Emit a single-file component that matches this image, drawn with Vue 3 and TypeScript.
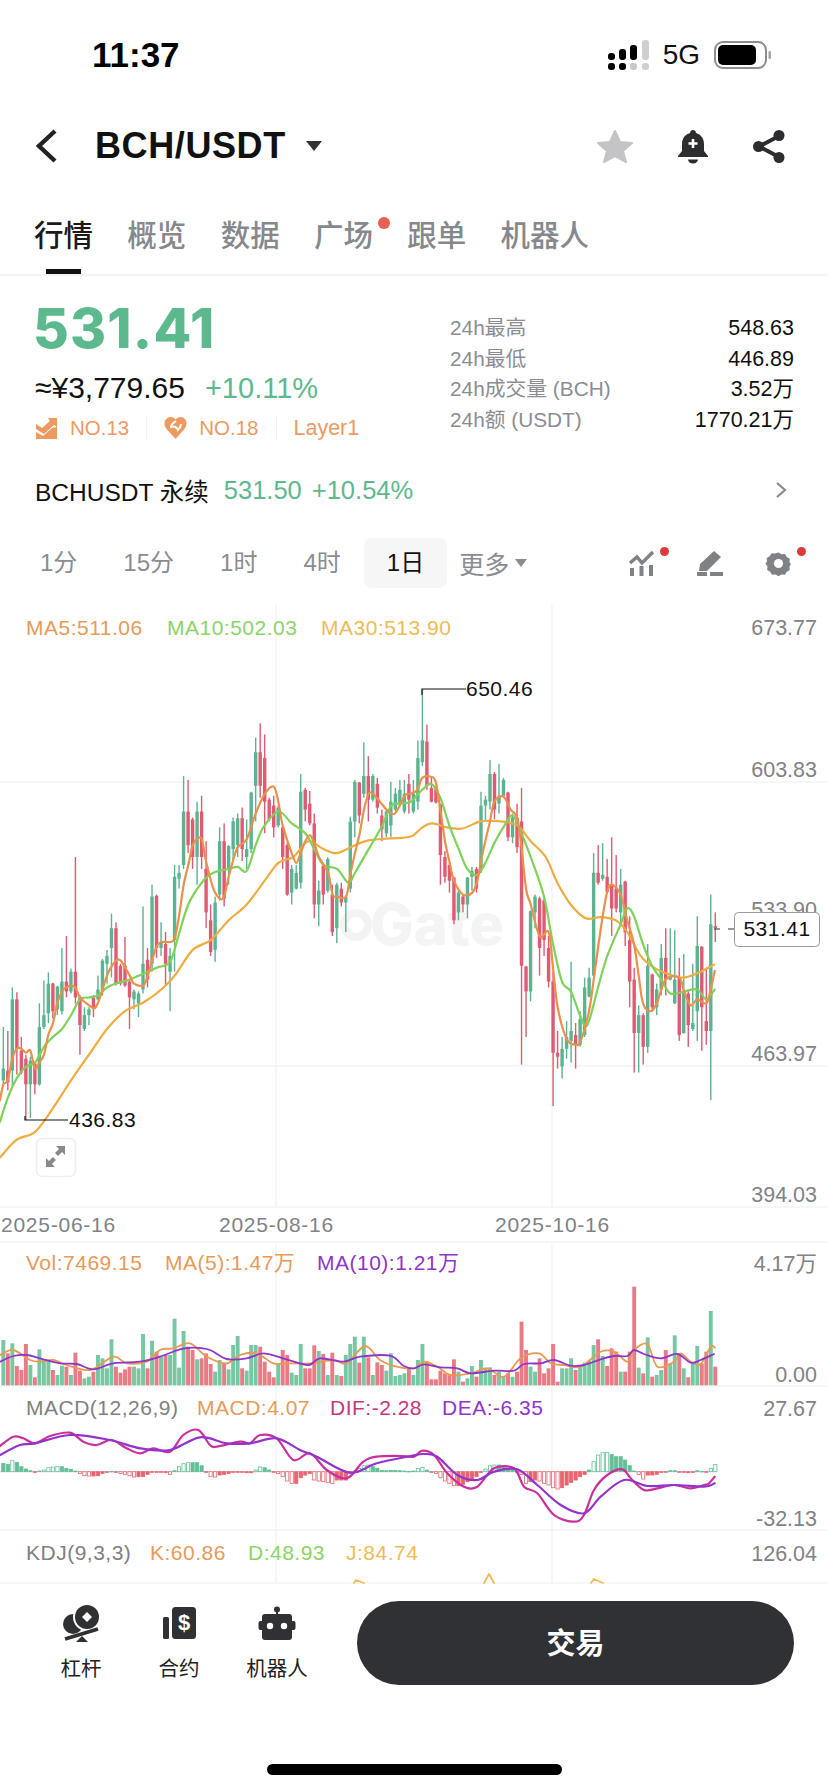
<script setup lang="ts">
type Pt = [number, number];

// candle rows, read off the chart: colour, high, body top, body bottom, low, volume top
const rows = `g 1080 1185 1215 1230 420|r 1090 1190 1220 1240 460|g 980 1010 1190 1230 430|r 992 1010 1135 1200 498|r 1105 1140 1195 1200 510|r 1150 1160 1225 1315 432|g 1155 1165 1225 1310 495|r 1170 1172 1225 1250 532|g 1020 1080 1225 1228 448|g 962 1050 1080 1085 478|g 942 970 1045 1070 482|r 968 970 1040 1058 510|g 975 978 1035 1050 525|g 880 965 1040 1048 497|r 850 965 990 1005 500|g 932 940 990 995 525|r 650 940 1005 1020 458|r 1000 1005 1075 1150 512|g 1030 1050 1085 1090 535|g 1030 1035 1050 1075 530|r 1000 1005 1030 1055 515|g 950 985 1010 1012 465|g 908 912 990 1000 475|g 885 900 920 970 505|g 793 830 880 955 418|r 815 830 970 975 500|r 920 925 970 975 518|r 852 925 975 978 508|r 960 965 1005 1085 500|g 985 990 1010 1035 500|g 990 995 1020 1055 505|g 775 920 985 995 402|r 880 910 960 980 505|g 720 750 920 940 422|r 745 748 880 905 455|g 815 865 880 900 470|r 840 870 920 975 465|g 880 900 940 1040 465|g 670 700 860 940 356|g 670 690 705 730 503|g 445 535 670 680 393|r 455 535 620 640 440|r 550 555 650 680 450|g 510 535 650 720 478|r 495 535 650 680 475|r 610 680 790 830 460|r 770 810 890 900 492|g 750 765 885 915 515|g 575 610 745 760 480|r 565 610 755 775 490|g 620 622 680 720 508|g 550 560 630 660 435|g 540 552 620 650 408|r 525 552 630 660 505|g 555 630 650 680 512|g 485 487 630 640 435|g 348 385 470 560 435|r 312 385 470 500 440|r 340 400 510 590 485|r 500 505 555 560 515|r 495 520 575 600 532|g 520 525 570 575 490|r 570 575 650 680 450|r 615 620 745 748 465|g 670 680 740 770 518|g 670 690 730 732 525|g 440 485 715 730 432|r 475 480 530 560 505|r 483 515 565 570 505|r 540 565 770 805 436|g 710 735 770 825 453|r 670 672 745 770 462|g 650 655 735 740 525|r 720 745 840 850 458|g 715 720 830 868 525|r 715 730 765 775 528|g 750 752 765 840 465|g 548 560 730 740 432|g 455 460 560 600 410|r 460 462 545 565 488|g 360 445 490 500 410|r 395 445 505 560 472|g 440 445 505 510 525|r 450 465 525 540 487|r 530 545 580 610 495|g 530 535 590 600 512|g 460 510 570 600 460|g 475 490 530 535 528|g 455 480 515 520 525|g 455 490 535 540 520|r 440 465 505 540 505|g 455 490 535 540 525|g 355 400 510 530 480|g 226 355 410 420 432|r 315 358 470 480 485|r 450 475 510 512 538|r 470 475 512 515 538|r 515 517 645 720 512|r 635 650 700 715 520|r 665 670 710 740 525|r 700 702 810 820 478|g 735 740 790 810 515|r 745 750 770 790 545|g 700 702 770 805 535|g 675 685 700 735 498|r 675 680 730 740 530|g 485 520 680 690 480|g 495 505 520 560 505|g 405 440 510 530 502|r 435 440 530 555 525|g 415 495 515 540 515|g 450 455 495 500 530|r 485 487 600 610 520|g 540 550 600 615 530|r 515 550 625 640 515|r 475 560 925 1175 365|r 925 927 990 1105 450|g 785 787 990 1015 500|g 745 750 790 830 515|r 750 755 880 950 475|r 755 760 860 900 520|r 850 880 965 980 505|r 940 965 1145 1280 432|r 1090 1145 1155 1185 545|g 1105 1135 1180 1210 505|g 1065 1105 1135 1160 505|g 915 1090 1115 1170 475|r 1070 1100 1125 1185 510|g 1040 1060 1125 1130 500|g 955 980 1100 1105 488|g 930 955 1003 1005 482|g 640 690 950 952 435|r 620 690 715 720 418|g 615 695 705 710 468|r 655 700 738 740 498|r 600 720 780 850 445|r 645 730 780 790 455|g 680 720 790 820 515|r 710 712 840 875 515|r 800 860 965 1030 455|r 930 960 1095 1195 260|g 1025 1050 1095 1195 503|r 1045 1050 1130 1175 520|g 870 925 1130 1145 412|r 945 947 1030 1040 530|g 970 985 1030 1050 525|g 870 905 985 1000 510|r 830 905 960 1000 450|g 830 950 960 962 490|g 835 960 1020 1022 406|r 905 955 1100 1115 460|g 895 990 1095 1097 505|r 985 995 1075 1130 532|g 920 1070 1085 1090 490|g 800 875 1040 1115 438|r 875 877 1030 1140 490|r 930 1065 1090 1125 455|g 745 820 1090 1265 333|r 790 825 830 865 500`
  .split('|')
  .map((r) => r.split(' '));

const candleX = (i: number, n: number) => 3.33 + (i * (715.3 - 3.33)) / (n - 1);
const py = (z: number) => 600 + z / 2.529;
const sy = (z: number) => 1200 + z / 3;

const candles = rows.map((r, i) => {
  const [high, top, bottom, low, vol] = r.slice(1).map(Number);
  return {
    x: candleX(i, rows.length),
    up: r[0] === 'g',
    high: py(high),
    low: py(low),
    top: py(top),
    h: Math.max(1, (bottom - top) / 2.529),
    volTop: sy(vol),
    volH: (556 - vol) / 3,
  };
});

const macdVals = [25, 22, 33, 28, 15, 8, 3, -2, 2, 5, 12, 14, 15, 15, 10, 7, 2, -5, -12, -13, -13, -12, -5, -2, 1, -2, -5, -8, -12, -16, -15, -14, -8, 0, 0, 0, -3, -8, 3, 15, 24, 27, 27, 27, 18, 0, -15, -16, -10, -8, -5, 0, -1, -1, -3, -3, 5, 14, 12, 5, 0, -6, -15, -28, -35, -35, -18, -10, -5, -25, -28, -30, -33, -35, -25, -25, -25, -5, 2, 10, 18, 20, 15, 10, 4, 3, 4, 4, 3, 2, 1, 2, 10, 13, 5, 0, -5, -18, -28, -35, -42, -42, -38, -30, -25, -15, -2, 8, 18, 20, 20, 18, 10, 5, 0, -8, -35, -30, -25, -28, -35, -40, -48, -52, -48, -40, -32, -25, -15, -8, 5, 30, 50, 57, 58, 52, 45, 45, 35, 18, 2, -8, -22, -10, -10, -8, -2, 0, 3, 3, -1, 0, -3, -2, 3, 1, -1, 10, 22];
const macdBars = macdVals.map((v, i) => ({
  x: candleX(i, macdVals.length),
  y: v > 0 ? 1471.7 - v / 3 : 1471.7,
  h: Math.max(0.6, Math.abs(v) / 3),
  up: v > 0,
  hollow: i > 0 && Math.abs(v) > Math.abs(macdVals[i - 1]) && Math.abs(v) > 4,
}));

// catmull-rom through the points read from the chart
function smooth(pts: Pt[]): string {
  let d = `M${pts[0][0].toFixed(1)} ${pts[0][1].toFixed(1)}`;
  for (let i = 0; i < pts.length - 1; i++) {
    const p0 = pts[Math.max(i - 1, 0)];
    const p1 = pts[i];
    const p2 = pts[i + 1];
    const p3 = pts[Math.min(i + 2, pts.length - 1)];
    const c1x = p1[0] + (p2[0] - p0[0]) / 6;
    const c1y = p1[1] + (p2[1] - p0[1]) / 6;
    const c2x = p2[0] - (p3[0] - p1[0]) / 6;
    const c2y = p2[1] - (p3[1] - p1[1]) / 6;
    d += `C${c1x.toFixed(1)} ${c1y.toFixed(1)} ${c2x.toFixed(1)} ${c2y.toFixed(1)} ${p2[0].toFixed(1)} ${p2[1].toFixed(1)}`;
  }
  return d;
}

function line(left: number[], right: number[], toY: (z: number) => number): string {
  const pts: Pt[] = [];
  for (let i = 0; i < left.length; i += 2) pts.push([left[i] / 3, toY(left[i + 1])]);
  for (let i = 0; i < right.length; i += 2) pts.push([414 + right[i] / 3, toY(right[i + 1])]);
  return smooth(pts);
}

const ma5 = line(
  [0, 1265, 10, 1225, 23, 1215, 37, 1160, 50, 1135, 64, 1135, 78, 1145, 91, 1140, 105, 1185, 118, 1170, 132, 1150, 145, 1100, 159, 1070, 172, 1020, 186, 990, 199, 980, 213, 975, 226, 980, 240, 1005, 267, 1025, 285, 1032, 300, 1005, 321, 950, 345, 915, 362, 912, 389, 950, 402, 970, 430, 975, 443, 950, 457, 910, 470, 875, 484, 865, 510, 865, 524, 855, 537, 800, 551, 720, 565, 670, 578, 620, 591, 605, 605, 605, 618, 660, 640, 730, 659, 755, 672, 750, 686, 700, 699, 660, 713, 625, 740, 605, 767, 540, 794, 490, 821, 472, 835, 510, 848, 570, 875, 640, 889, 665, 902, 640, 916, 610, 930, 595, 943, 615, 957, 650, 984, 690, 998, 745, 1011, 750, 1038, 750, 1052, 690, 1065, 640, 1079, 590, 1092, 530, 1106, 490, 1119, 490, 1140, 510, 1160, 530, 1185, 540, 1214, 495],
  [-10, 490, 10, 480, 25, 450, 50, 447, 65, 460, 79, 530, 93, 610, 106, 660, 120, 710, 147, 745, 175, 740, 190, 710, 201, 660, 214, 610, 228, 560, 241, 510, 268, 497, 290, 530, 309, 550, 322, 620, 336, 730, 350, 770, 377, 850, 404, 840, 417, 930, 431, 1030, 458, 1110, 485, 1125, 500, 1115, 525, 1040, 539, 960, 552, 880, 566, 800, 579, 740, 593, 720, 620, 745, 640, 810, 660, 870, 674, 950, 687, 1020, 710, 1040, 728, 1020, 755, 960, 796, 955, 810, 990, 830, 1025, 850, 1010, 877, 1020, 890, 985, 902, 938],
  py,
);
const ma10 = line(
  [0, 1320, 23, 1260, 50, 1210, 78, 1180, 105, 1170, 132, 1130, 159, 1105, 186, 1085, 213, 1050, 240, 1010, 267, 1005, 294, 1000, 321, 980, 348, 970, 389, 960, 430, 945, 470, 930, 510, 915, 535, 850, 565, 770, 605, 715, 640, 690, 686, 680, 713, 675, 740, 685, 767, 620, 790, 575, 835, 535, 875, 565, 916, 590, 943, 630, 970, 670, 1011, 680, 1045, 715, 1065, 690, 1106, 630, 1147, 570, 1174, 520, 1201, 515],
  [-10, 510, 25, 480, 52, 465, 79, 500, 106, 570, 134, 630, 160, 680, 190, 695, 214, 665, 241, 615, 268, 575, 296, 545, 322, 590, 350, 650, 390, 750, 417, 870, 444, 965, 471, 990, 498, 1050, 520, 1075, 552, 980, 580, 900, 620, 820, 640, 780, 660, 800, 687, 870, 714, 925, 742, 960, 769, 995, 810, 990, 850, 985, 877, 1010, 902, 985],
  py,
);
const ma30 = line(
  [0, 1410, 50, 1365, 105, 1345, 159, 1285, 213, 1215, 267, 1150, 321, 1085, 375, 1040, 430, 1018, 484, 985, 524, 950, 578, 885, 632, 860, 686, 810, 740, 770, 794, 710, 835, 665, 880, 650, 925, 610, 970, 630, 1011, 640, 1065, 620, 1106, 608, 1170, 603],
  [-10, 598, 25, 575, 55, 565, 100, 575, 145, 578, 200, 560, 260, 560, 310, 570, 350, 610, 395, 650, 430, 715, 470, 770, 515, 805, 560, 802, 605, 810, 640, 840, 680, 900, 720, 930, 760, 945, 810, 955, 860, 940, 900, 922],
  py,
);
const volMa10 = line(
  [0, 485, 40, 468, 80, 465, 130, 478, 180, 490, 230, 492, 280, 508, 340, 490, 420, 485, 480, 470, 540, 448, 580, 443, 630, 450, 680, 477, 740, 475, 790, 460, 850, 475, 925, 495, 960, 475, 1030, 485, 1080, 470, 1170, 467, 1210, 497],
  [0, 505, 30, 493, 80, 502, 130, 505, 170, 520, 240, 512, 300, 512, 330, 492, 380, 490, 420, 480, 470, 497, 510, 495, 560, 478, 600, 468, 640, 468, 660, 450, 690, 462, 740, 475, 790, 462, 830, 488, 860, 480, 900, 462],
  sy,
);
const volMa5 = line(
  [0, 465, 40, 450, 90, 480, 120, 485, 160, 480, 200, 495, 270, 510, 340, 470, 380, 490, 440, 485, 480, 450, 520, 445, 570, 430, 620, 470, 680, 490, 720, 465, 770, 460, 820, 490, 860, 490, 930, 490, 1000, 480, 1040, 490, 1095, 438, 1140, 480, 1190, 500],
  [0, 505, 30, 485, 70, 500, 110, 525, 170, 520, 220, 505, 270, 530, 320, 475, 375, 460, 410, 490, 450, 495, 500, 500, 560, 455, 600, 455, 640, 485, 660, 450, 700, 432, 730, 500, 780, 485, 800, 460, 830, 485, 860, 492, 890, 440, 902, 443],
  sy,
);
const dif = line(
  [0, 738, 40, 710, 70, 715, 105, 730, 150, 708, 210, 698, 250, 725, 290, 735, 335, 720, 380, 745, 420, 760, 460, 745, 510, 755, 550, 705, 595, 690, 630, 735, 650, 740, 720, 725, 750, 730, 780, 705, 830, 715, 880, 780, 930, 760, 980, 810, 1040, 835, 1090, 785, 1130, 770, 1210, 768],
  [0, 770, 25, 752, 60, 765, 100, 820, 150, 860, 190, 860, 240, 805, 300, 805, 330, 860, 370, 880, 420, 945, 480, 965, 510, 945, 540, 870, 580, 825, 625, 808, 650, 835, 690, 870, 730, 865, 780, 855, 830, 865, 870, 855, 885, 850, 902, 830],
  sy,
);
const dea = line(
  [0, 765, 60, 735, 105, 730, 210, 705, 330, 720, 420, 745, 510, 750, 600, 712, 680, 730, 750, 730, 830, 715, 900, 750, 950, 770, 1050, 818, 1130, 790],
  [-10, 768, 30, 762, 70, 770, 130, 825, 190, 840, 240, 815, 310, 808, 370, 855, 440, 915, 510, 940, 560, 890, 630, 840, 700, 858, 780, 855, 870, 860, 902, 850],
  sy,
);

const tabs = ['行情', '概览', '数据', '广场', '跟单', '机器人'];
const stats = [
  ['24h最高', '548.63'],
  ['24h最低', '446.89'],
  ['24h成交量 (BCH)', '3.52万'],
  ['24h额 (USDT)', '1770.21万'],
];
const frames = ['1分', '15分', '1时', '4时', '1日'];
const axis = [
  ['673.77', 635],
  ['603.83', 777],
  ['533.90', 917],
  ['463.97', 1061],
  ['394.03', 1202],
  ['4.17万', 1271],
  ['0.00', 1382],
  ['27.67', 1416],
  ['-32.13', 1526],
  ['126.04', 1561],
] as const;
</script>

<template>
  <div class="page">
    <div class="status">
      <span class="time">11:37</span>
      <div class="status-right">
        <svg width="42" height="30" viewBox="0 0 42 30">
          <rect x="0" y="13" width="7" height="7" rx="3" fill="#000" />
          <rect x="0" y="23" width="7" height="7" rx="3" fill="#000" />
          <rect x="11" y="9" width="7" height="11" rx="3" fill="#000" />
          <rect x="11" y="23" width="7" height="7" rx="3" fill="#000" />
          <rect x="22" y="5" width="7" height="15" rx="3" fill="#000" />
          <rect x="22" y="23" width="7" height="7" rx="3" fill="#c8c8c8" />
          <rect x="34" y="0" width="7" height="20" rx="3" fill="#cfcfcf" />
          <rect x="34" y="23" width="7" height="7" rx="3" fill="#cfcfcf" />
        </svg>
        <span class="net">5G</span>
        <svg width="58" height="28" viewBox="0 0 58 28">
          <rect x="1" y="1" width="51" height="26" rx="8" fill="none" stroke="#8d8d8d" stroke-width="2" />
          <rect x="4" y="4" width="38" height="20" rx="5" fill="#000" />
          <rect x="54.5" y="10" width="2.5" height="8" rx="1.2" fill="#a5a5a5" />
        </svg>
      </div>
    </div>

    <div class="nav">
      <svg class="back" width="22" height="34" viewBox="0 0 22 34">
        <path d="M19 2 3 17l16 15" fill="none" stroke="#222" stroke-width="4.4" />
      </svg>
      <span class="pair">BCH/USDT</span>
      <span class="pair-caret"></span>
      <div class="nav-icons">
        <svg width="38" height="36" viewBox="0 0 38 36">
          <path d="M19 3l5 11 12 1-9 8 3 11-11-6-11 6 3-11-9-8 12-1z" fill="#c4c4c6" stroke="#c4c4c6" stroke-width="2" stroke-linejoin="round" />
        </svg>
        <svg width="32" height="35" viewBox="0 0 32 35">
          <path d="M16 1c2 0 3 1.500 3 3 5 1.500 8 5.500 8 11v7l4 5v1H1v-1l4-5v-7c0-5.500 3-9.500 8-11 0-1.500 1-3 3-3z" fill="#2b2d30" />
          <path d="M11 30.500h10a5 4 0 0 1-10 0z" fill="#2b2d30" />
          <path d="M16 10v9M11.500 14.500h9" stroke="#fff" stroke-width="2.600" />
        </svg>
        <svg width="34" height="35" viewBox="0 0 34 35">
          <path d="M27 7 7 17.500 27 28" fill="none" stroke="#2b2d30" stroke-width="4" />
          <circle cx="27" cy="6.500" r="5.500" fill="#2b2d30" />
          <circle cx="6.500" cy="17.500" r="5.500" fill="#2b2d30" />
          <circle cx="27" cy="28.500" r="5.500" fill="#2b2d30" />
        </svg>
      </div>
    </div>

    <div class="tabs">
      <div v-for="(t, i) in tabs" :key="t" class="tab" :class="{ active: i === 0 }">
        {{ t }}
        <span v-if="t === '广场'" class="tab-dot"></span>
      </div>
    </div>

    <div class="summary">
      <div class="summary-left">
        <div class="price">531.41</div>
        <div class="fiat">≈¥3,779.65<span class="change">+10.11%</span></div>
        <div class="tags">
          <svg width="23" height="22" viewBox="0 0 23 22">
            <path d="M1 7l6 4 8-7-2-3h9v9l-3-2-10 9-8-5z" fill="#ec9a5f" />
            <path d="M1 15l7 4 9-8 5-1v12H1z" fill="#ec9a5f" />
          </svg>
          <span>NO.13</span>
          <i></i>
          <svg width="23" height="24" viewBox="0 0 23 24">
            <path d="M11.500 23 2.500 13C-1.500 8 1 1 7 1c2 0 3.500 1 4.500 2.500C13 2 14.500 1 16.500 1c5.500 0 8 7 4 12z" fill="#ec9a5f" />
            <path d="M12 5c-3 2-5 4-5 6 3-1 6 0 7 3 2-2 3-4 3-6" fill="none" stroke="#fff" stroke-width="2" />
          </svg>
          <span>NO.18</span>
          <i></i>
          <span class="layer">Layer1</span>
        </div>
      </div>
      <div class="stats">
        <div v-for="s in stats" :key="s[0]" class="stat">
          <span class="stat-label">{{ s[0] }}</span>
          <span class="stat-value">{{ s[1] }}</span>
        </div>
      </div>
    </div>

    <div class="perp">
      <span class="perp-name">BCHUSDT 永续</span>
      <span class="perp-num">531.50</span>
      <span class="perp-num">+10.54%</span>
      <svg class="perp-arrow" width="12" height="18" viewBox="0 0 12 18">
        <path d="M2 2l8 7-8 7" fill="none" stroke="#8a8a8a" stroke-width="2.200" />
      </svg>
    </div>

    <div class="frames">
      <div v-for="f in frames" :key="f" class="frame" :class="{ active: f === '1日' }">{{ f }}</div>
      <div class="more">更多<span class="more-caret"></span></div>
      <div class="tools">
        <div class="tool">
          <svg width="27" height="26" viewBox="0 0 27 26">
            <path d="M2 13l7-6 5 6L25 2" fill="none" stroke="#7f8285" stroke-width="3.400" />
            <path d="M2 18h4v8H2zM11.500 16h4v10h-4zM21 15h4v11h-4z" fill="#7f8285" />
          </svg>
          <span class="tool-dot"></span>
        </div>
        <div class="tool">
          <svg width="28" height="26" viewBox="0 0 28 26">
            <path d="M18 1l7 6L11 21H3l1-7z" fill="#7f8285" />
            <path d="M14 22h13v4H14zM1 22h10v4H1z" fill="#7f8285" />
          </svg>
        </div>
        <div class="tool">
          <svg width="27" height="27" viewBox="0 0 27 27">
            <path d="M13.500 2.500l3 1.700 3.500-.3 1.800 3 3 1.800-.3 3.500 1.500 1.800-1.500 2.500.3 3.500-3 1.800-1.800 3-3.500-.3-3 1.700-3-1.700-3.500.3-1.800-3-3-1.800.3-3.500L.5 13.500l1.500-2-.3-3.500 3-1.800 1.800-3 3.500.3z" fill="#7f8285" />
            <circle cx="13.500" cy="13.500" r="4.600" fill="#fff" />
          </svg>
          <span class="tool-dot"></span>
        </div>
      </div>
    </div>

    <svg class="chart" width="828" height="979" viewBox="0 605 828 979">
      <g stroke="#f3f3f3" stroke-width="1.500">
        <path d="M276 605V1207M552 605V1207M276 1245V1583M552 1245V1583" />
        <path d="M0 782H828M0 1066H828M0 1207H828M0 1242H828M0 1386H828M0 1530H828M0 1583H828" />
      </g>

      <g>
        <circle cx="356" cy="925" r="12" fill="none" stroke="#f3f3f3" stroke-width="8" />
        <text x="370" y="945" class="mark-text">Gate</text>
      </g>

      <g v-for="c in candles" :key="c.x">
        <rect :x="c.x - 0.7" :y="c.high" width="1.400" :height="c.low - c.high" :fill="c.up ? '#5cb390' : '#df5a72'" />
        <rect :x="c.x - 1.700" :y="c.top" width="3.400" :height="c.h" :fill="c.up ? '#5cb390' : '#df5a72'" />
        <rect :x="c.x - 1.950" :y="c.volTop" width="3.900" :height="c.volH" :fill="c.up ? '#76c7a2' : '#ea7a84'" />
      </g>

      <path :d="ma30" class="ln" stroke="#efac40" />
      <path :d="ma10" class="ln" stroke="#7ed257" />
      <path :d="ma5" class="ln" stroke="#e9914a" />

      <text x="26" y="635" class="lg" fill="#e79a58">MA5:511.06</text>
      <text x="167" y="635" class="lg" fill="#8ad566">MA10:502.03</text>
      <text x="321" y="635" class="lg" fill="#efbb55">MA30:513.90</text>

      <path d="M422 695V689H466M25 1116V1120H68" fill="none" stroke="#111" stroke-width="1.200" />
      <text x="466" y="696" class="lg" fill="#111">650.46</text>
      <text x="69" y="1127" class="lg" fill="#111">436.83</text>

      <text v-for="a in axis" :key="a[0]" x="817" :y="a[1]" class="lg axis">{{ a[0] }}</text>

      <path d="M714 929h6M728 929h6" stroke="#333" stroke-width="1.200" />
      <rect x="734.500" y="912.500" width="85" height="34" rx="4" fill="#fff" stroke="#999" />
      <text x="777" y="936" class="lg tag-text">531.41</text>

      <rect x="36.500" y="1138.500" width="39" height="38" rx="6" fill="#fff" stroke="#eeeeee" stroke-width="1.500" />
      <path d="M46 1167v-9l3 3 4-4 3 3-4 4 3 3zM65 1146v9l-3-3-4 4-3-3 4-4-3-3z" fill="#8a8a8a" />

      <text x="1" y="1232" class="lg date">2025-06-16</text>
      <text x="219" y="1232" class="lg date">2025-08-16</text>
      <text x="495" y="1232" class="lg date">2025-10-16</text>

      <path :d="volMa5" class="ln thin" stroke="#ea9a4e" />
      <path :d="volMa10" class="ln thin" stroke="#8f35cc" />
      <text x="26" y="1270" class="lg" fill="#e79a58">Vol:7469.15</text>
      <text x="165" y="1270" class="lg" fill="#e79a58">MA(5):1.47万</text>
      <text x="317" y="1270" class="lg" fill="#8f35cc">MA(10):1.21万</text>

      <rect x="0" y="1471.300" width="716" height="0.800" fill="#cfcfcf" />
      <rect
        v-for="b in macdBars"
        :key="b.x"
        :x="b.x - 1.600"
        :y="b.y"
        width="3.200"
        :height="b.h"
        :fill="b.hollow ? '#fff' : b.up ? '#63bf96' : '#e8646f'"
        :stroke="b.up ? '#63bf96' : '#e8646f'"
        stroke-width="0.800"
      />
      <path :d="dif" class="ln" stroke="#cb2f9c" />
      <path :d="dea" class="ln" stroke="#9233cc" />
      <text x="26" y="1415" class="lg" fill="#808080">MACD(12,26,9)</text>
      <text x="197" y="1415" class="lg" fill="#e79a58">MACD:4.07</text>
      <text x="330" y="1415" class="lg" fill="#c8357f">DIF:-2.28</text>
      <text x="442" y="1415" class="lg" fill="#8f35cc">DEA:-6.35</text>

      <text x="26" y="1560" class="lg" fill="#808080">KDJ(9,3,3)</text>
      <text x="150" y="1560" class="lg" fill="#e79a58">K:60.86</text>
      <text x="248" y="1560" class="lg" fill="#8ad566">D:48.93</text>
      <text x="346" y="1560" class="lg" fill="#efbb55">J:84.74</text>
      <path d="M354 1583l2-3 8 3M484 1583l5-9 5 9M591 1583l3-4 9 4" class="ln thin" stroke="#efbb55" />
    </svg>

    <div class="bottom">
      <div class="action">
        <div class="action-icon">
          <svg width="38" height="38" viewBox="0 0 38 38">
            <circle cx="11" cy="20" r="10" fill="#2f3135" />
            <circle cx="25" cy="13" r="14" fill="#fff" />
            <circle cx="25" cy="13" r="12" fill="#2f3135" />
            <path d="M25 8l5 5-5 5-5-5z" fill="#fff" />
            <path d="M3 35l33-10" stroke="#2f3135" stroke-width="3.600" />
            <path d="M14 38l6-6 6 6z" fill="#2f3135" />
          </svg>
        </div>
        <span>杠杆</span>
      </div>
      <div class="action">
        <div class="action-icon">
          <svg width="34" height="34" viewBox="0 0 34 34">
            <rect x="1" y="11" width="6" height="22" rx="1.500" fill="#2f3135" />
            <rect x="10" y="1" width="24" height="32" rx="3.500" fill="#2f3135" />
            <text x="22" y="24" class="dollar">$</text>
          </svg>
        </div>
        <span>合约</span>
      </div>
      <div class="action">
        <div class="action-icon">
          <svg width="38" height="35" viewBox="0 0 38 35">
            <circle cx="19" cy="3.500" r="3" fill="#2f3135" />
            <path d="M19 4v6" stroke="#2f3135" stroke-width="2" />
            <rect x="4" y="8" width="30" height="26" rx="3" fill="#2f3135" />
            <rect x="0.500" y="15" width="37" height="9" rx="2" fill="#2f3135" />
            <circle cx="12" cy="20" r="3.200" fill="#fff" />
            <circle cx="26" cy="20" r="3.200" fill="#fff" />
          </svg>
        </div>
        <span>机器人</span>
      </div>
      <div class="trade">交易</div>
    </div>

    <div class="home"></div>
  </div>
</template>

<style scoped>
.page {
  width: 828px;
  height: 1792px;
  overflow: hidden;
  background: #fff;
  display: flex;
  flex-direction: column;
  font-family: "Liberation Sans", "Noto Sans CJK SC", sans-serif;
  color: #111;
}

.status {
  height: 110px;
  display: flex;
  align-items: flex-start;
  justify-content: space-between;
  padding: 40px 56px 0 92px;
  box-sizing: border-box;
}

.time {
  font-size: 35px;
  line-height: 30px;
  font-weight: 700;
  color: #000;
}

.status-right {
  display: flex;
  align-items: center;
  margin-left: auto;
}

.net {
  font-size: 28px;
  line-height: 30px;
  margin: 0 14px 0 13px;
}

.nav {
  height: 72px;
  display: flex;
  align-items: center;
  padding: 0 42px 0 36px;
}

.back {
  margin-right: 37px;
}

.pair {
  font-size: 36px;
  font-weight: 700;
  letter-spacing: 0.6px;
}

.pair-caret {
  width: 0;
  height: 0;
  margin-left: 20px;
  border-left: 8px solid transparent;
  border-right: 8px solid transparent;
  border-top: 10px solid #333;
}

.nav-icons {
  margin-left: auto;
  display: flex;
  align-items: center;
  gap: 43px;
}

.tabs {
  height: 94px;
  box-sizing: border-box;
  display: flex;
  gap: 34.300px;
  padding: 34px 0 0 34px;
  border-bottom: 2px solid #f4f4f4;
}

.tab {
  position: relative;
  font-size: 29.500px;
  font-weight: 500;
  line-height: 40px;
  height: 58px;
  color: #85888c;
}

.tab.active {
  color: #1a1a1a;
}

.tab.active::after {
  content: "";
  position: absolute;
  left: 12px;
  bottom: 0;
  width: 35px;
  height: 5px;
  background: #111;
}

.tab-dot {
  position: absolute;
  top: 1px;
  right: -17px;
  width: 12px;
  height: 12px;
  border-radius: 50%;
  background: #e8604f;
}

.summary {
  height: 190px;
  box-sizing: border-box;
  padding: 22px 35px 0;
  display: flex;
}

.summary-left {
  width: 415px;
}

.price {
  font-family: Inter, "Liberation Sans", sans-serif;
  font-size: 55px;
  line-height: 60px;
  font-weight: 800;
  letter-spacing: 1.200px;
  margin-left: -2px;
  color: #5cb98d;
}

.fiat {
  margin-top: 15px;
  font-size: 30px;
  line-height: 30px;
}

.change {
  margin-left: 20px;
  font-size: 29px;
  color: #5cb98d;
}

.tags {
  margin-top: 10px;
  height: 30px;
  display: flex;
  align-items: center;
  font-size: 20.500px;
  color: #ec9a5f;
}

.tags i {
  width: 1px;
  height: 24px;
  margin: 0 17px;
  background: #f2f2f2;
}

.tags svg + span {
  margin-left: 12px;
}

.layer {
  font-size: 21.500px;
}

.stats {
  flex: 1;
  margin-top: 15px;
}

.stat {
  height: 30.700px;
  line-height: 30.700px;
  display: flex;
  justify-content: space-between;
  font-size: 20.800px;
}

.stat-label {
  color: #8b8d90;
}

.stat-value {
  font-size: 21.500px;
  margin-right: -1px;
}

.perp {
  height: 48px;
  display: flex;
  align-items: center;
  padding: 0 41px 0 35px;
  font-size: 24.500px;
}

.perp-name {
  margin-right: 15px;
}

.perp-num {
  margin-right: 10px;
  font-size: 25.500px;
  color: #5cb98d;
}

.perp-arrow {
  margin-left: auto;
}

.frames {
  height: 50px;
  margin-top: 24px;
  display: flex;
  align-items: center;
  padding: 0 36px 0 17px;
  font-size: 24px;
  color: #8a8c90;
}

.frame {
  padding: 0 23px;
  height: 50px;
  line-height: 50px;
  border-radius: 8px;
}

.frame.active {
  color: #111;
  background: #f6f6f6;
}

.more {
  margin-left: 12px;
  font-size: 25px;
  display: flex;
  align-items: center;
}

.more-caret {
  margin-left: 6px;
  width: 0;
  height: 0;
  border-left: 6px solid transparent;
  border-right: 6px solid transparent;
  border-top: 8px solid #8a8c90;
}

.tools {
  margin-left: auto;
  display: flex;
  align-items: center;
  gap: 41px;
}

.tool {
  position: relative;
  display: flex;
}

.tool-dot {
  position: absolute;
  top: -3px;
  right: -14px;
  width: 9px;
  height: 9px;
  border-radius: 50%;
  background: #dd3a3a;
}

.chart {
  display: block;
  margin-top: 17px;
  flex: none;
}

.ln {
  fill: none;
  stroke-width: 2.200;
  stroke-linejoin: round;
  stroke-linecap: round;
}

.ln.thin {
  stroke-width: 1.800;
}

.lg {
  font-family: "Liberation Sans", "Noto Sans CJK SC", sans-serif;
  font-size: 21px;
  letter-spacing: 0.5px;
}

.axis {
  text-anchor: end;
  fill: #808285;
  letter-spacing: 0;
  font-size: 21.500px;
}

.date {
  fill: #808285;
  letter-spacing: 0.750px;
}

.tag-text {
  text-anchor: middle;
  fill: #111;
}

.mark-text {
  font-family: Inter, "Liberation Sans", sans-serif;
  font-size: 58px;
  font-weight: 800;
  fill: #f4f4f4;
}

.bottom {
  height: 154px;
  box-sizing: border-box;
  padding: 17px 0 0 41px;
  display: flex;
  flex: none;
}

.action {
  width: 80px;
  margin-right: 18px;
  padding-top: 3px;
  font-size: 20.500px;
  line-height: 26px;
  color: #222;
  text-align: center;
}

.action-icon {
  height: 38px;
  margin-bottom: 14px;
  display: flex;
  align-items: center;
  justify-content: center;
}

.trade {
  margin-left: 22px;
  width: 437px;
  height: 84px;
  border-radius: 42px;
  background: #2f3135;
  color: #fff;
  font-size: 29px;
  font-weight: 600;
  line-height: 86px;
  text-align: center;
}

.dollar {
  font-family: "Liberation Sans", sans-serif;
  font-size: 22px;
  font-weight: 700;
  text-anchor: middle;
  fill: #fff;
}

.home {
  flex: none;
  width: 295px;
  height: 11px;
  margin: 26px 0 0 267px;
  border-radius: 6px;
  background: #000;
}
</style>
